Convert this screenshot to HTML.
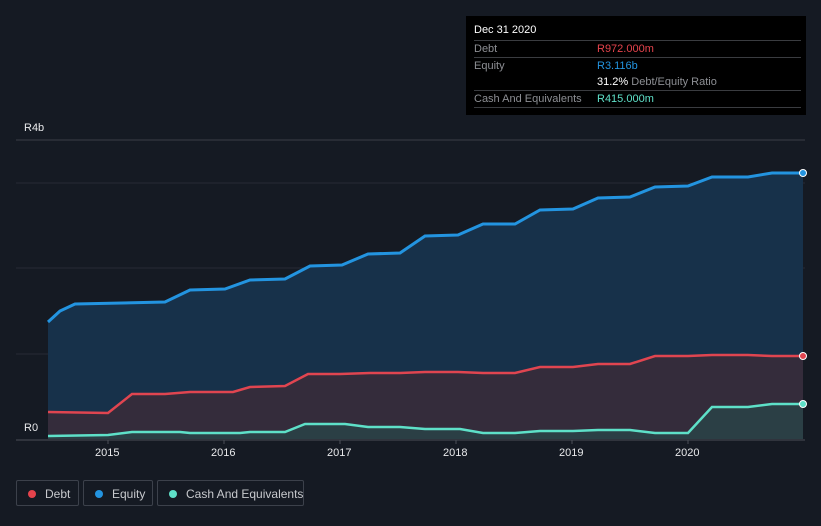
<!DOCTYPE html>
<html style="width:821px;height:526px;overflow:hidden"><head><style>
body{margin:0;width:821px;height:526px;background:#151a23;font-family:"Liberation Sans",sans-serif;overflow:hidden;position:relative}
.tt{position:absolute;left:466px;top:16px;width:340px;height:99px;background:#000;font-size:11px;color:#8d8f94;white-space:nowrap}
.tt .r{position:absolute;left:8px;right:5px;border-top:1px solid #3a3c40;height:17px;line-height:17px}
.lg{position:absolute;top:480px;height:26px;border:1px solid #3c414b;border-radius:2px;color:#c7c9cd;font-size:12px;line-height:26px;box-sizing:border-box;white-space:nowrap}
.lg i{position:absolute;left:11px;top:9px;width:8px;height:8px;border-radius:50%}
.lg span{position:absolute;left:28px}
.ax{position:absolute;font-size:11px;color:#e8e9eb}
</style></head><body>
<svg width="821" height="526" style="position:absolute;left:0;top:0">
<line x1="16" y1="140" x2="805" y2="140" stroke="#3a3f47" stroke-width="1"/>
<line x1="16" y1="183" x2="805" y2="183" stroke="#262b34"/>
<line x1="16" y1="268" x2="805" y2="268" stroke="#262b34"/>
<line x1="16" y1="354" x2="805" y2="354" stroke="#262b34"/>
<polygon fill="#17314a" points="48,322 60,311 75,304 165,302 190,290 225,289 250,280 285,279 310,266 342,265 368,254 400,253 425,236 458,235 483,224 515,224 540,210 573,209 598,198 630,197 655,187 688,186 712,177 748,177 772,173 803,173 803,439 48,439"/>
<polygon fill="#342c3b" points="48,412 108,413 132,394 165,394 190,392 233,392 250,387 285,386 308,374 340,374 370,373 400,373 425,372 458,372 483,373 515,373 540,367 573,367 598,364 630,364 655,356 688,356 712,355 748,355 772,356 803,356 803,439 48,439"/>
<polygon fill="#2b3f45" points="48,436 108,435 132,432 180,432 190,433 240,433 250,432 285,432 305,424 345,424 368,427 400,427 425,429 460,429 483,433 515,433 540,431 573,431 598,430 630,430 655,433 688,433 712,407 748,407 772,404 803,404 803,439 48,439"/>
<polyline fill="none" stroke="#2394e0" stroke-width="3" points="48,322 60,311 75,304 165,302 190,290 225,289 250,280 285,279 310,266 342,265 368,254 400,253 425,236 458,235 483,224 515,224 540,210 573,209 598,198 630,197 655,187 688,186 712,177 748,177 772,173 803,173"/>
<polyline fill="none" stroke="#e04550" stroke-width="2.5" points="48,412 108,413 132,394 165,394 190,392 233,392 250,387 285,386 308,374 340,374 370,373 400,373 425,372 458,372 483,373 515,373 540,367 573,367 598,364 630,364 655,356 688,356 712,355 748,355 772,356 803,356"/>
<polyline fill="none" stroke="#5ee0c8" stroke-width="2.5" points="48,436 108,435 132,432 180,432 190,433 240,433 250,432 285,432 305,424 345,424 368,427 400,427 425,429 460,429 483,433 515,433 540,431 573,431 598,430 630,430 655,433 688,433 712,407 748,407 772,404 803,404"/>
<line x1="16" y1="440" x2="805" y2="440" stroke="#4a4f57"/>
<g stroke="#4a4f57"><line x1="108" y1="440" x2="108" y2="444"/><line x1="224" y1="440" x2="224" y2="444"/><line x1="340" y1="440" x2="340" y2="444"/><line x1="456" y1="440" x2="456" y2="444"/><line x1="572" y1="440" x2="572" y2="444"/><line x1="688" y1="440" x2="688" y2="444"/></g>
<circle cx="803" cy="173" r="3.5" fill="#2394e0" stroke="#fff" stroke-width="1"/>
<circle cx="803" cy="356" r="3.5" fill="#e04550" stroke="#fff" stroke-width="1"/>
<circle cx="803" cy="404" r="3.5" fill="#5ee0c8" stroke="#fff" stroke-width="1"/>
</svg>
<div class="ax" style="left:24px;top:122px">R4b</div>
<div class="ax" style="left:24px;top:422px">R0</div>
<div class="ax" style="left:95px;top:447px">2015</div>
<div class="ax" style="left:211px;top:447px">2016</div>
<div class="ax" style="left:327px;top:447px">2017</div>
<div class="ax" style="left:443px;top:447px">2018</div>
<div class="ax" style="left:559px;top:447px">2019</div>
<div class="ax" style="left:675px;top:447px">2020</div>
<div class="tt">
<div style="position:absolute;left:8px;top:8px;color:#fff">Dec 31 2020</div>
<div class="r" style="top:24px">Debt<b style="position:absolute;left:123px;color:#e5434c;font-weight:normal">R972.000m</b></div>
<div class="r" style="top:41px">Equity<b style="position:absolute;left:123px;color:#2394e0;font-weight:normal">R3.116b</b></div>
<div style="position:absolute;left:131px;top:58px;line-height:17px"><span style="color:#fff">31.2%</span> Debt/Equity Ratio</div>
<div class="r" style="top:74px">Cash And Equivalents<b style="position:absolute;left:123px;color:#5ee0c8;font-weight:normal">R415.000m</b></div>
<div class="r" style="top:91px;height:0"></div>
</div>
<div class="lg" style="left:16px;width:63px"><i style="background:#e5434c"></i><span>Debt</span></div>
<div class="lg" style="left:83px;width:70px"><i style="background:#2394e0"></i><span>Equity</span></div>
<div class="lg" style="left:157px;width:147px"><i style="background:#5ee0c8"></i><span>Cash And Equivalents</span></div>
</body></html>
